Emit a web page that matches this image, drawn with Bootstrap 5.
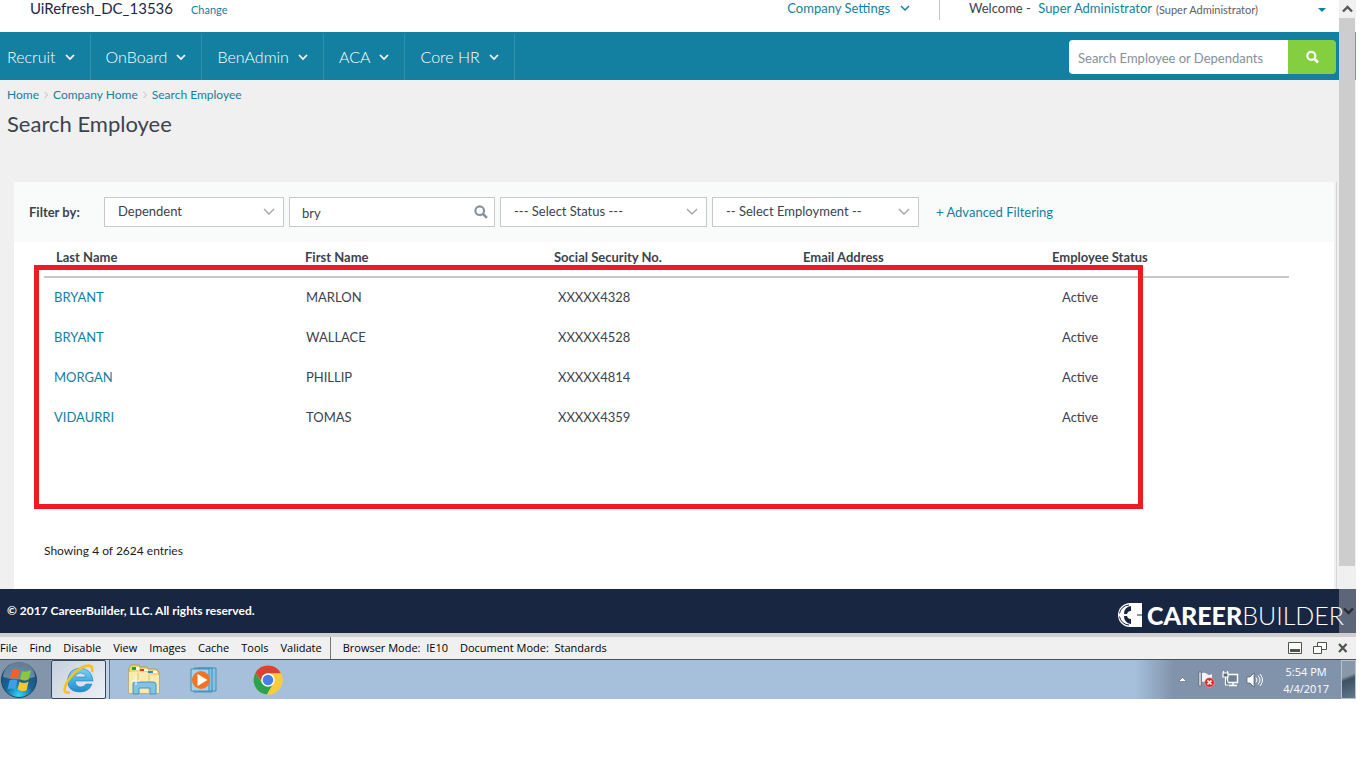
<!DOCTYPE html>
<html lang="en">
<head>
<meta charset="utf-8">
<meta name="viewport" content="width=device-width, initial-scale=1">
<title>Search Employee</title>
<link href="https://cdn.jsdelivr.net/npm/bootstrap@5.3.0/dist/css/bootstrap.min.css" rel="stylesheet">
<style>
:root{--teal:#1380a1;--ink:#3b434d;--navy:#192642}
body{font-family:Lato,"Open Sans",sans-serif;font-size:13px;line-height:20px;color:var(--ink);background:#fff}
a{color:var(--teal);text-decoration:none}
svg{display:block;flex:none}
.screen{margin-right:8px}
.viewport{background:#f0f0f0;overflow:hidden}
.topbar{height:32px;padding:0 30px;color:#1d2846;line-height:17px}
.topbar .company{font-size:15px}
.topbar .change{font-size:11px;line-height:20px;margin-left:18px}
.welcome{border-left:1px solid #c4c4c4;padding-left:29px;margin-left:27px;color:var(--ink)}
.text-note{font-size:11px;line-height:20px;color:#5c6066}
.caret-gap{margin-left:60px}
.mainnav{background:var(--teal);height:48px;padding:0 20px 0 0}
.mainnav .nav-link{color:#fff;font-size:16px;font-weight:300;line-height:24px;padding:11px 15px;border-right:1px solid #2f90ae;gap:9px}
.mainnav .nav-link:first-child{padding-left:7px}
.quick{width:267px;margin-bottom:6px}
.quick .form-control{height:34px;border:0;font-size:13px;padding:4px 9px 2px;border-radius:4px 0 0 4px}
.quick .form-control::placeholder{color:#85919b}
.quick .btn{background:#84cf40;border:0;width:48px;padding:0 18px;border-radius:0 4px 4px 0}
.crumbs{padding:5px 0 0 7px;font-size:12px}
h1{font-size:22px;line-height:30px;font-weight:400;margin:0;padding:4px 7px 0;color:var(--ink)}
.panel-frame{margin:43px 19px 0 14px;border-right:1px solid #d6d6d6;padding-right:2px}
.panel{background:#fff;border-radius:3px 3px 0 0}
.filters{background:#f9fbfb;padding:15px;gap:5px}
.filters .fw-bold{width:70px}
.filters .form-select,.filters .form-control{height:30px;border:1px solid #c8c8c8;border-radius:0;font-size:13px;color:var(--ink);padding:4px 13px}
.filters .form-select{background-image:url("data:image/svg+xml,%3Csvg xmlns='http://www.w3.org/2000/svg' viewBox='0 0 12 8'%3E%3Cpath d='M1 1l5 5 5-5' fill='none' stroke='%23a5a5a5' stroke-width='1.4'/%3E%3C/svg%3E");background-size:12px 8px;background-position:right 8px center}
.filters .form-control{padding:4px 12px 2px}
.w-type{width:180px}.w-name{width:206px}.w-field{width:207px}
.find-btn{right:7px;top:8px}
.results{padding:0 45px 0 30px}
.results table{table-layout:fixed;margin:0;--bs-table-color:var(--ink);--bs-table-bg:transparent}
.results thead th{padding:5px 12px 9px;border-bottom:2px solid #c8c8c8;white-space:nowrap}
.results tbody td{border:0;padding:9px 10px 11px;height:40px}
.results tbody td:nth-child(2){padding-left:13px}
.results tbody td:nth-child(3){padding-left:16px}
.results tbody td:nth-child(5){padding-left:22px}
.callout-box{left:20px;width:84%;top:23px;height:244px;border:5px solid #ed1c24;pointer-events:none}
.count{padding:103px 30px 28px;font-size:12px;color:#1c1c1c}
.sitefoot{background:var(--navy);height:44px;padding:0 12px 0 7px;color:#fff;font-size:12px}
.wordmark{font-size:25px;line-height:30px;color:#fff}
.wordmark b{font-weight:900}
.scroller{top:0;right:0;width:17px;height:100%;background:rgba(240,240,240,.32)}
.scroller .end{height:18px;background:#f0f0f0;padding:5px 3px}
.scroller .thumb{height:548px;background:#cdcdcd;margin-right:1px}
.devbar{background:#f0f0f0;border-top:4px solid #cfcfcf;border-bottom:1px solid #46545a;height:27px;font:11px/20px "Open Sans",sans-serif;color:#000;padding-right:8px}
.devbar button{border:0;background:none;padding:0;color:inherit}
.devbar .menu{gap:12px}
.devbar .vr{background:#777;opacity:1}
.wintools{gap:11px}
.taskbar{height:39px;background:#a6c0dc;font:11px/17px "Open Sans",sans-serif}
.taskbar .btn{border:0;border-radius:0;padding:0}
.startzone{width:51px;background:#8395ab}
.taskbar .active-app{width:55px;border:1px solid #34475c;border-radius:2px;background:linear-gradient(135deg,#c6d0dd,#edf1f6)}
.app-edge{width:4px;border-right:1px solid #5c7187;background:#c4d3e3}
.pinned{padding-left:17px;gap:30px}
.tray{background:linear-gradient(90deg,#a6c0dc,#8193ab 40px);padding-left:44px;color:#fff;gap:7px}
.clock{margin:0 5px 0 13px}
.peek{width:15px;height:39px;border:1px solid #b6c2ce;background:linear-gradient(160deg,#8798a9 0 40%,#3e5163 50%,#61778c)}
</style>
</head>
<body>
<div class="screen">
 <div class="viewport position-relative">
  <header class="topbar bg-white d-flex align-items-start">
   <span class="company">UiRefresh_DC_13536</span><a href="#" class="change">Change</a>
   <div class="ms-auto d-flex">
    <a href="#" class="d-flex">Company Settings<svg class="ms-2 mt-1" width="14" height="9" viewBox="0 0 14 9"><path d="M3 2l4 4 4-4" fill="none" stroke="#1380a1" stroke-width="1.5"/></svg></a>
    <div class="welcome d-flex"><span>Welcome -&nbsp;</span><a href="#" class="ms-1">Super Administrator</a><span class="text-note ms-1">(Super Administrator)</span>
     <svg class="caret-gap mt-2" width="8" height="4" viewBox="0 0 8 4"><path d="M0 0h8L4 4z" fill="#1380a1"/></svg>
    </div>
   </div>
  </header>
  <nav class="mainnav d-flex align-items-end">
   <a href="#" class="nav-link d-flex align-items-center">Recruit <svg width="10" height="8"><use href="#chev"/></svg></a>
   <a href="#" class="nav-link d-flex align-items-center">OnBoard <svg width="10" height="8"><use href="#chev"/></svg></a>
   <a href="#" class="nav-link d-flex align-items-center">BenAdmin <svg width="10" height="8"><use href="#chev"/></svg></a>
   <a href="#" class="nav-link d-flex align-items-center">ACA <svg width="10" height="8"><use href="#chev"/></svg></a>
   <a href="#" class="nav-link d-flex align-items-center">Core HR <svg width="10" height="8"><use href="#chev"/></svg></a>
   <form class="quick d-flex ms-auto">
    <input class="form-control" type="text" aria-label="Search Employee or Dependants" placeholder="Search Employee or Dependants">
    <button class="btn" type="button" aria-label="Search"><svg width="13" height="14" viewBox="0 0 13 13"><circle cx="5.3" cy="5.3" r="4" fill="none" stroke="#fff" stroke-width="2.2"/><path d="M8 8l4 4" stroke="#fff" stroke-width="2.6"/></svg></button>
   </form>
  </nav>
  <div class="crumbs d-flex align-items-center">
   <a href="#">Home</a><svg class="mx-1" width="6" height="8" viewBox="0 0 6 8"><path d="M1.5 1l3 3-3 3" fill="none" stroke="#bbb"/></svg>
   <a href="#">Company Home</a><svg class="mx-1" width="6" height="8" viewBox="0 0 6 8"><path d="M1.5 1l3 3-3 3" fill="none" stroke="#bbb"/></svg>
   <a href="#">Search Employee</a>
  </div>
  <h1>Search Employee</h1>
  <main class="panel-frame"><div class="panel">
   <form class="filters d-flex align-items-center">
    <label class="fw-bold" for="ftype">Filter by:</label>
    <select id="ftype" class="form-select w-type"><option>Dependent</option></select>
    <div class="position-relative w-name"><input class="form-control" type="text" value="bry" aria-label="Name">
     <svg class="find-btn position-absolute" width="14" height="14" viewBox="0 0 13 13"><circle cx="5.3" cy="5.3" r="4" fill="none" stroke="#85919b" stroke-width="2"/><path d="M8 8l4 4" stroke="#85919b" stroke-width="2.4"/></svg></div>
    <select class="form-select w-field" aria-label="Status"><option>--- Select Status ---</option></select>
    <select class="form-select w-field" aria-label="Employment"><option>-- Select Employment --</option></select>
    <a href="#" class="ms-2 ps-1">+ Advanced Filtering</a>
   </form>
   <div class="results position-relative">
    <table class="table">
     <thead><tr><th>Last Name</th><th>First Name</th><th>Social Security No.</th><th>Email Address</th><th>Employee Status</th></tr></thead>
     <tbody>
      <tr><td><a href="#">BRYANT</a></td><td>MARLON</td><td>XXXXX4328</td><td></td><td>Active</td></tr>
      <tr><td><a href="#">BRYANT</a></td><td>WALLACE</td><td>XXXXX4528</td><td></td><td>Active</td></tr>
      <tr><td><a href="#">MORGAN</a></td><td>PHILLIP</td><td>XXXXX4814</td><td></td><td>Active</td></tr>
      <tr><td><a href="#">VIDAURRI</a></td><td>TOMAS</td><td>XXXXX4359</td><td></td><td>Active</td></tr>
     </tbody>
    </table>
    <div class="callout-box position-absolute"></div>
   </div>
   <div class="count">Showing 4 of 2624 entries</div>
  </div></main>
  <footer class="sitefoot d-flex align-items-center justify-content-between">
   <span class="fw-bold">© 2017 CareerBuilder, LLC. All rights reserved.</span>
   <div class="d-flex align-items-center wordmark mt-2">
    <svg class="me-1" width="26" height="26" viewBox="0 0 26 26"><path fill="#fff" d="M13 1h12v24H13A12 12 0 0 1 13 1z"/><path fill="none" stroke="#192642" stroke-width="1" d="M12 3a10 10 0 0 0-9.5 8.500M12 23a10 10 0 0 1-9.500-8.500"/><path fill="#192642" d="M14 4v5a4 4 0 0 0-4 3H7a7.500 7.500 0 0 1 7-8zM14 22v-5a4 4 0 0 1-4-3H7a7.500 7.500 0 0 0 7 8zM20 12.500h5v1h-5z"/></svg>
    <b>CAREER</b><span class="fw-light">BUILDER</span>
   </div>
  </footer>
  <div class="scroller position-absolute d-flex flex-column" aria-hidden="true">
   <div class="end"><svg width="11" height="8" viewBox="0 0 11 8"><path d="M1 6.500l4.500-4.500 4.500 4.500" fill="none" stroke="#555" stroke-width="2.400"/></svg></div>
   <div class="thumb"></div>
   <svg class="mt-auto mb-3 ms-1" width="11" height="10" viewBox="0 0 11 10"><path d="M1 1.500l4.500 4.500 4.500-4.500" fill="none" stroke="#272b33" stroke-width="2.400"/></svg>
  </div>
 </div>
 <div class="devbar d-flex align-items-center">
  <div class="menu d-flex"><button>File</button><button>Find</button><button>Disable</button><button>View</button><button>Images</button><button>Cache</button><button>Tools</button><button>Validate</button></div>
  <span class="vr ms-2 me-2"></span>
  <div class="menu d-flex ps-1"><button>Browser Mode:&nbsp; IE10</button><button>Document Mode:&nbsp; Standards</button></div>
  <div class="wintools d-flex ms-auto">
   <button aria-label="Minimize"><svg width="14" height="12" viewBox="0 0 14 12"><path d="M.5 .5h13v11H.5z" fill="#fff" stroke="#4c544c"/><path d="M2 7h10v3H2z" fill="#4c544c"/></svg></button>
   <button aria-label="Restore"><svg width="14" height="12" viewBox="0 0 14 12"><path d="M4.500.5h9v7h-9z" fill="#fff" stroke="#4c544c"/><path d="M.5 4.500h8v7h-8z" fill="#fff" stroke="#4c544c"/></svg></button>
   <button aria-label="Close"><svg width="10" height="10" viewBox="0 0 10 10"><path d="M1 1l7.500 8M8.500 1L1 9" stroke="#4c544c" stroke-width="2.200"/></svg></button>
  </div>
 </div>
 <div class="taskbar d-flex">
  <div class="startzone d-flex align-items-center"><button class="btn" aria-label="Start">
   <svg width="38" height="38" viewBox="0 0 38 38"><defs><radialGradient id="orb" cx=".5" cy=".95" r=".9"><stop offset="0" stop-color="#35d8fa"/><stop offset=".45" stop-color="#15669b"/><stop offset="1" stop-color="#24496b"/></radialGradient></defs>
    <circle cx="19" cy="19" r="17.500" fill="url(#orb)" stroke="#1c4563"/><path d="M3 16a16 15 0 0 1 32 0q-16 5-32 0z" fill="#fff" opacity=".3"/>
    <path d="M12 9q4-2 8 0l-2 9q-4-2-8 0z" fill="#f0622b"/><path d="M22 10q4 2 9-1l-2 9q-4 3-9 0z" fill="#8cc63c"/><path d="M9.500 19.500q4-2 8 0l-2 9q-4-2-8 0z" fill="#3ba0e6"/><path d="M19.500 20.500q4 3 9 0l-2 9q-4 2-9-1z" fill="#fcc62c"/></svg></button></div>
  <button class="btn active-app d-flex align-items-center justify-content-center" aria-label="Internet Explorer">
   <svg width="32" height="34" viewBox="0 0 32 34"><defs><linearGradient id="ie" x2="0" y2="1"><stop stop-color="#7bd3f5"/><stop offset="1" stop-color="#1a8cd2"/></linearGradient></defs>
    <path fill="url(#ie)" stroke="#2580b5" stroke-width=".6" d="M30 18H12q1 6 6 6 3 0 5-3h6q-3 8-12 8Q5 29 4.500 18 5 6 17 5q12 1 13 13zM12 14h11q-1-4-5.500-4T12 14z"/>
    <path d="M29 9Q31 1 22 3 10 8 3 21q-4 11 4 8" fill="none" stroke="#f7c21a" stroke-width="2.600"/></svg></button>
  <div class="app-edge"></div>
  <div class="pinned d-flex align-items-center">
   <button class="btn" aria-label="Explorer"><svg width="33" height="32" viewBox="0 0 33 32"><path d="M2 4l2-3h8l1 2h7l1 2h8l3 3v21H2z" fill="#f0d77c" stroke="#bd9d3c"/><path d="M5 3h4v3H5z" fill="#18a832"/><path d="M13 5h4v2h-4z" fill="#d63b26"/><path d="M21 7h5v2h-5z" fill="#2d88dc"/><path d="M9 3h3v3H9zM17 5h4v2h-4zM26 7h4v2h-4z" fill="#fff"/><path d="M2 8h18l2 3h10v18H2z" fill="#f9ebad"/><path d="M11 9v19M22 11v17" stroke="#dec673"/><path d="M6 30V20q0-2 2-2h18q3 0 3 2v10h-6v-6H12v6z" fill="#82c2e5" stroke="#4794bc"/><path d="M9 12v9M5 17h8" stroke="#fff"/></svg></button>
   <button class="btn" aria-label="Media Player"><svg width="29" height="28" viewBox="0 0 29 28"><path d="M8 2h18v23H8zM4 2h18v24H4z" fill="#84c3e5" stroke="#438eb8"/><path d="M1 3h18v22H1z" fill="#a3d3ed" stroke="#438eb8"/><circle cx="11" cy="14" r="9" fill="#f27422"/><path d="M7.500 8l10 6-10 6z" fill="#fff"/></svg></button>
   <button class="btn ms-1" aria-label="Chrome"><svg width="30" height="30" viewBox="0 0 30 30"><circle cx="15" cy="15" r="14.500" fill="#f8cc3c"/><path d="M2.500 7.700A14.500 14.500 0 0 0 14 29.500L21 18H9z" fill="#2aa251"/><path d="M15 8.200h12.800A14.500 14.500 0 0 1 14 29.500l6.500-11.500z" fill="#f8cc3c"/><path d="M2.500 7.700A14.500 14.500 0 0 1 27.800 8.200H15a6.800 6.800 0 0 0-6.500 8.500z" fill="#d94336"/><circle cx="15" cy="15" r="6.700" fill="#fff"/><circle cx="15" cy="15" r="5.300" fill="#477fe8"/></svg></button>
  </div>
  <div class="tray d-flex align-items-center ms-auto">
   <svg class="me-1" width="9" height="5" viewBox="0 0 9 5"><path d="M.5 4.500l4-4 4 4z" fill="#fff" stroke="#42566d" stroke-width=".5"/></svg>
   <svg width="17" height="17" viewBox="0 0 17 17"><path d="M1 1h2v14H1z" fill="#fff" stroke="#3e4b59" stroke-width=".6"/><path d="M4 2q3-1 5 1t5 0v8q-3 1-5 0t-5 0z" fill="#f3f5f7"/><circle cx="11.500" cy="11.500" r="4.800" fill="#d32f2a" stroke="#f6b0a8" stroke-width=".6"/><path d="M9.500 9.500l4 4m0-4l-4 4" stroke="#fff" stroke-width="1.600"/></svg>
   <svg width="17" height="17" viewBox="0 0 17 17"><path d="M5.500 3.500h10v8h-10z" fill="#6f8195" stroke="#fff" stroke-width="1.400"/><path d="M7 14.500h8M11 12v2" stroke="#fff" stroke-width="1.500"/><path d="M1 2h5v4H1zM1.500 0v2M5.500 0v2M3.500 6v8h3" fill="#56697e" stroke="#fff" stroke-width="1.200"/></svg>
   <svg width="17" height="16" viewBox="0 0 17 16"><path d="M1 5h3l4-4v14l-4-4H1z" fill="#fff" stroke="#4c5c6d" stroke-width=".7"/><path d="M10 5.500q2 2.500 0 5M12 3.500q4 4.500 0 9M14 2q5 6 0 12" fill="none" stroke="#fff"/></svg>
   <div class="clock text-center">5:54 PM<br>4/4/2017</div>
   <div class="peek"></div>
  </div>
 </div>
</div>
<svg width="0" height="0" class="position-absolute"><symbol id="chev" viewBox="0 0 10 8"><path d="M1 2l4 4 4-4" fill="none" stroke="#fff" stroke-width="1.700"/></symbol></svg>
<script src="https://cdn.jsdelivr.net/npm/bootstrap@5.3.0/dist/js/bootstrap.bundle.min.js"></script>
</body>
</html>
